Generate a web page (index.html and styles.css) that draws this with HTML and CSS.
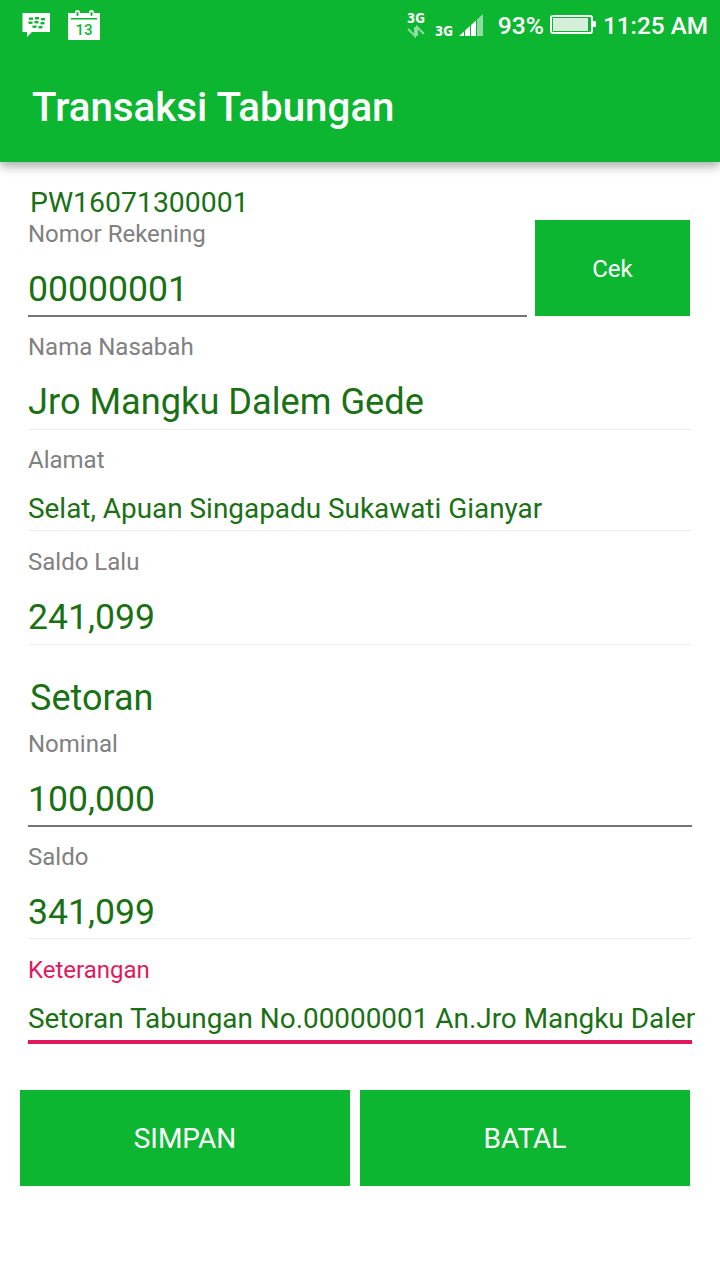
FILE: index.html
```html
<!DOCTYPE html>
<html>
	<head>
		<meta charset="utf-8">
		<title>Transaksi Tabungan</title>
		<link rel="stylesheet" href="styles.css">
	</head>
	<body>

	<div class="topbar">
		<div class="status">
			<svg class="ico_bbm" width="30" height="26" viewBox="0 0 30 26">
				<path d="M0.5 1H28V20H10L5 25V20H0.5Z" fill="#fff"/>
				<g fill="#0db631">
					<rect x="7" y="5.5" width="4" height="2.4"/><rect x="13" y="5" width="4" height="2.4"/><rect x="19" y="6" width="4" height="2.4"/>
					<rect x="6.5" y="9.5" width="4" height="2.4"/><rect x="12.5" y="9" width="4" height="2.4"/><rect x="18.5" y="10" width="4" height="2.4"/>
					<rect x="10.5" y="13.5" width="4" height="2.4"/><rect x="16.5" y="14" width="4" height="2.4"/>
				</g>
			</svg>
			<svg class="ico_cal" width="32" height="32" viewBox="0 0 32 32">
				<path d="M0 4H32V31H0Z" fill="#fff"/>
				<rect x="3" y="9" width="26" height="1.5" fill="#0db631"/>
				<rect x="7" y="1" width="5" height="7" rx="2.5" fill="#fff"/>
				<rect x="21" y="1" width="5" height="7" rx="2.5" fill="#fff"/>
				<rect x="8.5" y="3" width="2" height="4" rx="1" fill="#0db631"/>
				<rect x="22.5" y="3" width="2" height="4" rx="1" fill="#0db631"/>
				<text x="16" y="25.5" text-anchor="middle" class="cal_num">13</text>
			</svg>
			<div class="spacer"></div>
			<svg class="ico_net" width="20" height="26" viewBox="0 0 20 26">
				<text x="0" y="11" textLength="18" lengthAdjust="spacingAndGlyphs" class="net_txt">3G</text>
				<path d="M1 17L8 24V15M10 24V15L17 22" fill="none" stroke="#8fdca0" stroke-width="2"/>
			</svg>
			<svg class="ico_sig" width="48" height="26" viewBox="0 0 48 26">
				<text x="0" y="23.5" textLength="18" lengthAdjust="spacingAndGlyphs" class="net_txt">3G</text>
				<path d="M24 24L29 19.4V24Z" fill="#fff"/>
				<path d="M30 18.5L35 13.9V24H30Z" fill="#fff"/>
				<path d="M36 13L41 8.4V24H36Z" fill="#fff"/>
				<path d="M42 7.5L48 2V24H42Z" fill="#8fdca0"/>
			</svg>
			<span class="pct">93%</span>
			<svg class="ico_bat" width="46" height="20" viewBox="0 0 46 20">
				<rect x="1" y="1" width="41" height="17" rx="2" fill="none" stroke="#fff" stroke-width="2"/>
				<rect x="3" y="3" width="35" height="13" fill="#d5efdb"/>
				<rect x="43" y="6" width="3" height="6" fill="#fff"/>
			</svg>
			<span class="clock">11:25 AM</span>
		</div>
		<div class="title">Transaksi Tabungan</div>
	</div>

	<div class="form">
		<div class="kode">PW16071300001</div>

		<div class="row_cek">
			<div class="field f_input">
				<div class="lbl">Nomor Rekening</div>
				<div class="val f_num">00000001</div>
			</div>
			<div class="btn btn_cek">Cek</div>
		</div>

		<div class="field f_plain">
			<div class="lbl">Nama Nasabah</div>
			<div class="val f_name">Jro Mangku Dalem Gede</div>
		</div>

		<div class="field f_plain f_small">
			<div class="lbl">Alamat</div>
			<div class="val">Selat, Apuan Singapadu Sukawati Gianyar</div>
		</div>

		<div class="field f_plain">
			<div class="lbl">Saldo Lalu</div>
			<div class="val f_num">241,099</div>
		</div>

		<div class="heading">Setoran</div>

		<div class="field f_input f_nominal">
			<div class="lbl">Nominal</div>
			<div class="val f_num">100,000</div>
		</div>

		<div class="field f_plain f_tight">
			<div class="lbl">Saldo</div>
			<div class="val f_num">341,099</div>
		</div>

		<div class="field f_small f_focus">
			<div class="lbl">Keterangan</div>
			<div class="val">Setoran Tabungan No.00000001 An.Jro Mangku Dalem Gede</div>
		</div>

		<div class="actions">
			<div class="btn">SIMPAN</div>
			<div class="btn">BATAL</div>
		</div>
	</div>

	</body>
</html>
```

FILE: styles.css
```css
body{
	margin: 0;
	background: #fff;
	font-family: Roboto, "Liberation Sans", sans-serif;
}

.topbar{
	height: 162px;
	background: #0db631;
	color: #fff;
	box-shadow: 0 4px 10px rgba(0,0,0,0.35);
}
.status{
	display: flex;
	align-items: center;
	height: 50px;
	padding: 0 12px 0 22px;
}
.spacer{
	flex: 1;
}
.ico_bbm{
	margin-right: 16px;
}
.ico_net{
	margin-right: 8px;
}
.cal_num{
	font-family: Roboto, sans-serif;
	font-size: 15px;
	font-weight: 500;
	fill: #0db631;
}
.net_txt{
	font-family: "DejaVu Sans", sans-serif;
	font-size: 14px;
	font-weight: 700;
	fill: #fff;
}
.pct{
	font-size: 24.7px;
	font-weight: 500;
	margin-left: 15px;
	margin-right: 6px;
}
.clock{
	font-size: 24.3px;
	font-weight: 500;
	margin-left: 7px;
}
.title{
	padding: 35px 0 0 32px;
	font-size: 40.3px;
	line-height: 46px;
	font-weight: 500;
}

.form{
	padding: 24px 28px 0;
	color: #1a7014;
}
.kode{
	height: 34px;
	padding-left: 2px;
	font-size: 28.4px;
	line-height: 34px;
}
.row_cek{
	display: flex;
	align-items: flex-start;
	margin-right: 2px;
}
.row_cek .field{
	flex: 1;
	margin-top: 0;
}
.btn_cek{
	width: 155px;
	height: 94px;
	padding-top: 2px;
	margin-left: 8px;
	font-size: 24px;
}

.field{
	margin-top: 16px;
}
.lbl{
	height: 28px;
	font-size: 24px;
	line-height: 28px;
	color: #80807f;
}
.val{
	height: 42px;
	padding-top: 20px;
	font-size: 36px;
	line-height: 42px;
	white-space: nowrap;
	overflow: hidden;
}
.f_num{
	font-size: 35.6px;
}
.f_name{
	font-size: 36.2px;
}
.f_plain{
	padding-bottom: 6px;
	border-bottom: 1px solid #eeeeee;
}
.f_tight{
	padding-bottom: 5px;
}
.f_input{
	padding-bottom: 5px;
	border-bottom: 2px solid #757575;
}
.f_small .val{
	padding-top: 14px;
	font-size: 27.9px;
}
.f_small.f_plain{
	padding-bottom: 0;
	margin-bottom: 17px;
}
.f_nominal{
	margin-top: 10px;
}
.f_focus{
	margin-top: 17px;
	border-bottom: 4px solid #e0195f;
}
.f_focus .lbl{
	color: #e0195f;
}
.f_focus .val{
	width: 667px;
}
.heading{
	height: 44px;
	margin-top: 31px;
	padding-left: 2px;
	font-size: 36px;
	line-height: 44px;
}

.btn{
	display: flex;
	align-items: center;
	justify-content: center;
	background: #0db631;
	color: #fff;
}
.actions{
	display: flex;
	gap: 10px;
	margin: 46px 2px 0 -8px;
}
.actions .btn{
	width: 330px;
	height: 96px;
	font-size: 28px;
}
```
